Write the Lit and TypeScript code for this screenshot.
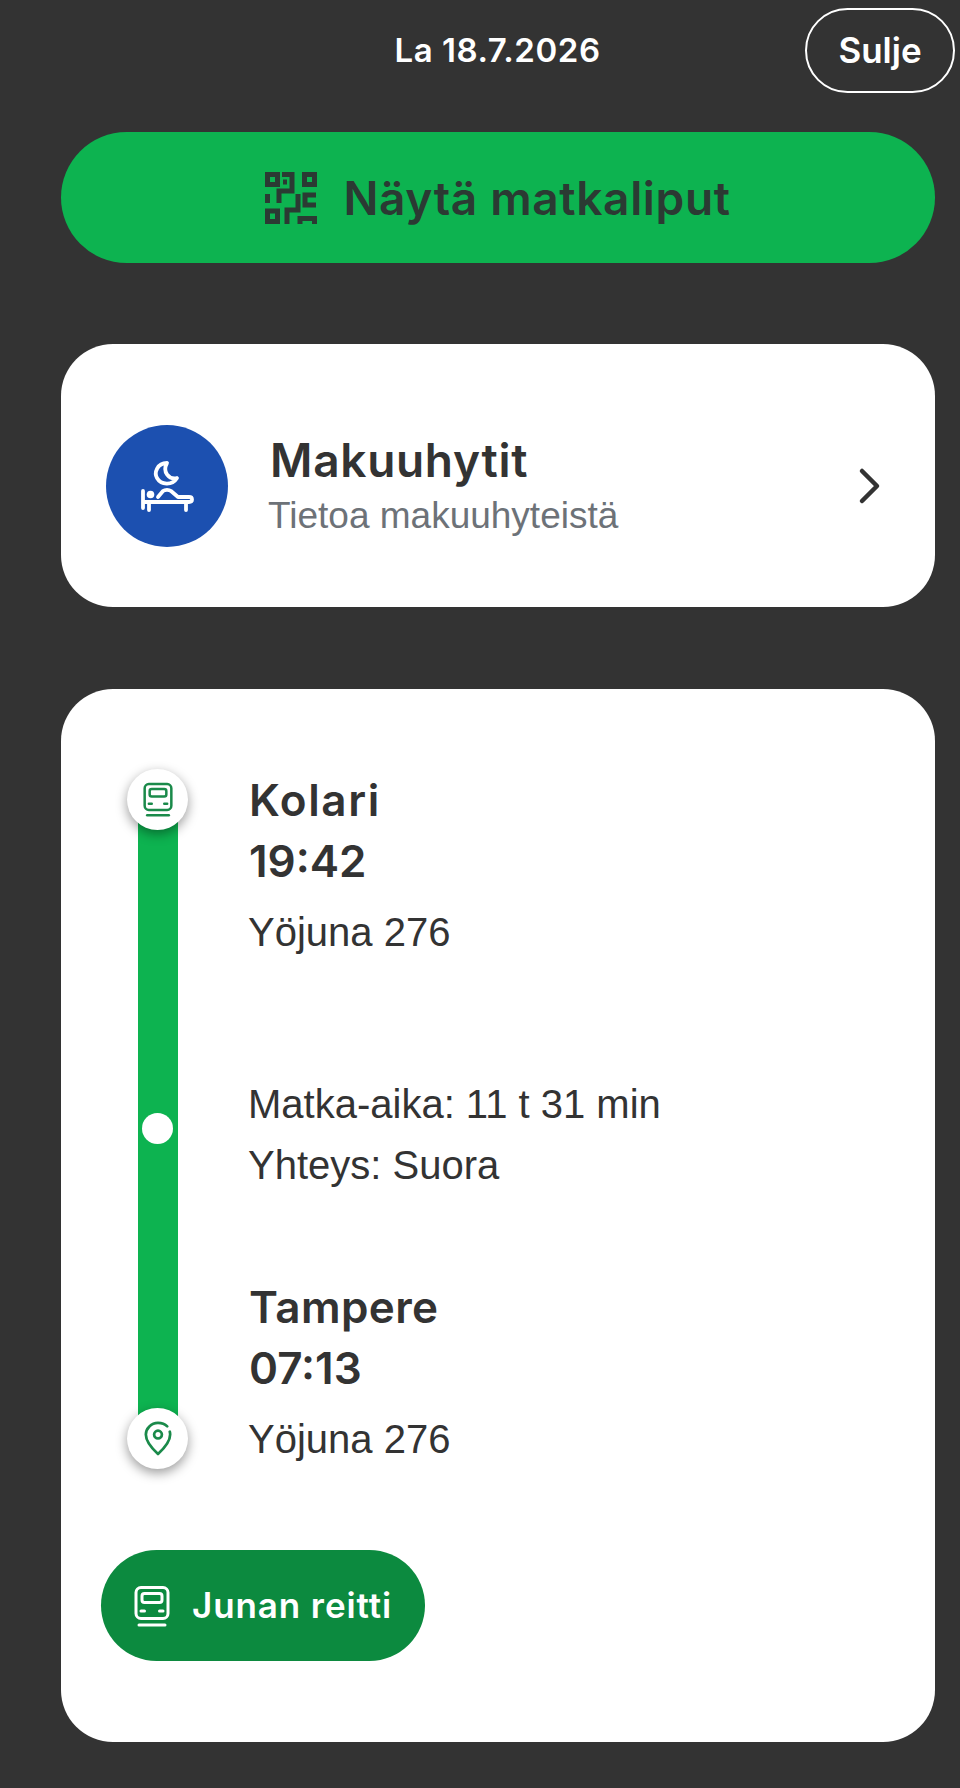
import { LitElement, html, css, svg } from "lit";
import { customElement } from "lit/decorators.js";

const trainIcon = svg`<rect x="4" y="3" width="32" height="31" rx="5" fill="none" stroke="currentColor" stroke-width="3"/>
<rect x="10" y="9" width="20" height="9" rx="2.5" fill="none" stroke="currentColor" stroke-width="3"/>
<path d="M9 26.5h3.5M27.5 26.5H31" fill="none" stroke="currentColor" stroke-width="3" stroke-linecap="round"/>
<path d="M7 40.5H33" fill="none" stroke="currentColor" stroke-width="3" stroke-linecap="round"/>`;

@customElement("app-root")
export class AppRoot extends LitElement {
  static styles = css`
    :host {
      display: block;
      width: 960px;
      height: 1788px;
      box-sizing: border-box;
      background: #333333;
      color: #333333;
      font-family: "Liberation Sans", Arial, sans-serif;
      font-variant-ligatures: none;
      overflow: hidden;
    }
    .head { display: grid; grid-template-columns: 1fr auto 1fr; align-items: center; padding: 8px 5px 0 40px; }
    .date { grid-column: 2; font: 600 33px/1 Inter, sans-serif; letter-spacing: 0.55px; color: #fff; }
    .close {
      grid-column: 3; justify-self: end; box-sizing: border-box; width: 150px; height: 85px;
      border: 2.5px solid #fff; border-radius: 43px; display: flex; align-items: center; justify-content: center;
      font: 600 35px/1 Inter, sans-serif; color: #fff;
    }
    .main { display: flex; flex-direction: column; margin: 39px 25px 0 61px; gap: 82px; }
    .tickets {
      height: 131px; border-radius: 66px; background: #0db350; display: flex; align-items: center;
      justify-content: center; gap: 26px; font: 600 46px/1 Inter, sans-serif; letter-spacing: 0.65px; color: #2b3a33;
      margin-bottom: -1px;
    }
    .tickets svg { width: 52px; height: 52px; }
    .card { background: #fff; border-radius: 52px; }
    .info { height: 263px; box-sizing: border-box; display: flex; align-items: center; padding: 20px 52px 0 45px; }
    .circle { width: 122px; height: 122px; border-radius: 50%; background: #1c50b0; display: flex; align-items: center; justify-content: center; flex: none; }
    .circle svg { width: 54px; height: 52px; }
    .info-text { flex: 1; margin-left: 42px; }
    .info-title { font: 600 46px/56px Inter, sans-serif; letter-spacing: 0.7px; color: #333; margin-top: -2px; }
    .info-sub { font: 400 37px/44px "Liberation Sans", sans-serif; color: #6d7278; margin-top: 6px; margin-left: -2px; }
    .chev { width: 26px; height: 40px; }
    .route { height: 1053px; box-sizing: border-box; padding: 80px 0 0 40px; }
    .timeline { display: grid; grid-template-columns: 61px 1fr; column-gap: 61px; margin-left: 26px; }
    .rail {
      display: flex; flex-direction: column; align-items: center; justify-content: space-between; height: 700px;
      background: linear-gradient(#0db350, #0db350) center / 40px calc(100% - 60px) no-repeat;
    }
    .node {
      width: 61px; height: 61px; border-radius: 50%; background: #fff; color: #1a8a4a;
      display: flex; align-items: center; justify-content: center; box-shadow: 0 4px 12px rgba(0,0,0,.4);
    }
    .node svg { width: 30px; height: 35px; }
    .dot { width: 31px; height: 31px; border-radius: 50%; background: #fff; margin-top: 18px; }
    .stops { display: flex; flex-direction: column; margin-top: 1px; }
    .name, .time { font: 600 44px/61px Inter, sans-serif; }
    .name { letter-spacing: 0.4px; }
    .name.wide { letter-spacing: 1.6px; }
    .body { font: 400 40px/61px "Liberation Sans", sans-serif; margin-left: -1px; }
    .stop .body { margin-top: 10px; }
    .mid { margin-top: 111px; }
    .stop-end { margin-top: 81px; }
    .route-btn {
      width: 324px; height: 111px; border-radius: 56px; background: #0c8a3f; color: #fff; margin-top: 80px;
      display: flex; align-items: center; gap: 22px; padding-left: 33px; box-sizing: border-box;
      font: 600 35px/1 Inter, sans-serif; letter-spacing: 0.9px;
    }
    .route-btn svg { width: 36px; height: 42px; flex: none; }
  `;

  render() {
    return html`
      <div class="head"><div class="date">La 18.7.2026</div><div class="close">Sulje</div></div>
      <div class="main">
        <div class="tickets">
          <svg viewBox="0 0 52 52" fill="none" stroke="currentColor" stroke-width="5">
            <rect x="2.5" y="2.5" width="10" height="10"/><rect x="39.5" y="2.5" width="10" height="10"/>
            <rect x="2.5" y="39" width="10" height="10.500"/>
            <path d="M17 2.500H27V19H14V31M18 10h4M2.500 22v9M51 23H40V33H51M33 22V38H22V52M35 52V46.500H49.500V52"/>
          </svg>
          <span>Näytä matkaliput</span>
        </div>
        <div class="card info">
          <div class="circle">
            <svg viewBox="0 0 54 52" fill="none" stroke="#fff" stroke-width="3.800" stroke-linecap="round" stroke-linejoin="round">
              <path d="M27 3C17 3 14 13 17 18 21 25 32 26 37 18 29 20 22 12 27 3Z"/>
              <path d="M3 31V48M3 42H49C51.500 42 52 41 52 39.500S51 37 49 37H38L31 31C29 29.500 25 29.500 23 31L18 37"/>
              <circle cx="10.500" cy="34.500" r="3.800" fill="#fff" stroke="none"/>
              <path d="M9 42V50M46 42V50"/>
            </svg>
          </div>
          <div class="info-text">
            <div class="info-title">Makuuhytit</div>
            <div class="info-sub">Tietoa makuuhyteistä</div>
          </div>
          <svg class="chev" viewBox="0 0 26 40" fill="none" stroke="#333" stroke-width="4.500" stroke-linecap="round" stroke-linejoin="round"><path d="M5 5l15 15L5 35"/></svg>
        </div>
        <div class="card route">
          <div class="timeline">
            <div class="rail">
              <div class="node"><svg viewBox="2 1 36 41">${trainIcon}</svg></div>
              <div class="dot"></div>
              <div class="node">
                <svg viewBox="0 0 30 36" fill="none" stroke="currentColor" stroke-width="2.800" stroke-linecap="round" stroke-linejoin="round">
                  <path d="M24.500 5.500C22 3 19 2 15 2 8 2 2.500 7.500 2.500 14c0 8 7 15 12.500 20 5.500-5 12.500-12 12.500-20 0-1-.1-2-.4-3"/>
                  <circle cx="15" cy="14" r="4"/>
                </svg>
              </div>
            </div>
            <div class="stops">
              <div class="stop">
                <div class="name wide">Kolari</div>
                <div class="time">19:42</div>
                <div class="body">Yöjuna 276</div>
              </div>
              <div class="mid">
                <div class="body">Matka-aika: 11 t 31 min</div>
                <div class="body">Yhteys: Suora</div>
              </div>
              <div class="stop stop-end">
                <div class="name">Tampere</div>
                <div class="time">07:13</div>
                <div class="body">Yöjuna 276</div>
              </div>
            </div>
          </div>
          <div class="route-btn"><svg viewBox="2 1 36 41">${trainIcon}</svg><span>Junan reitti</span></div>
        </div>
      </div>
    `;
  }
}
